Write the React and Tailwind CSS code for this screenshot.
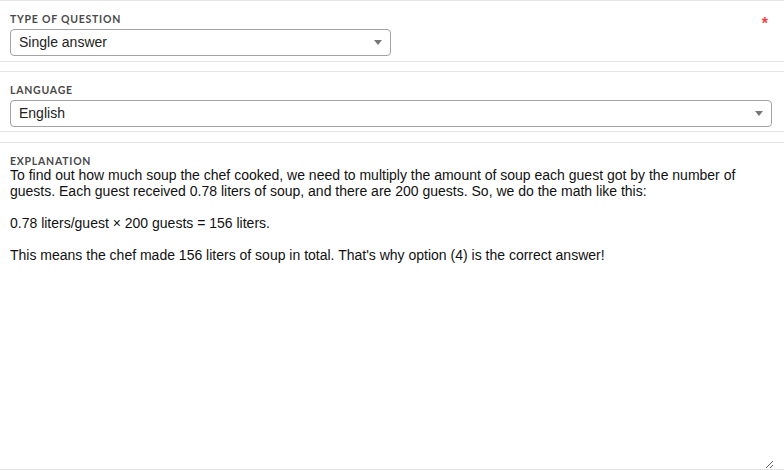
import { useState } from "react";

const labelCls =
  "block text-[10.5px] leading-[12px] font-bold uppercase tracking-[0.75px] text-[#4a4a4a] font-['Lato',sans-serif]";

const Caret = () => (
  <svg width="8" height="5" viewBox="0 0 8 5" className="shrink-0">
    <path d="M0 0h8L4 5z" fill="#777" />
  </svg>
);

const SelectBox = ({ value, className }) => (
  <div
    className={`h-[27px] flex items-center justify-between pl-[8px] pr-[8px] border border-[#a3a3a3] rounded-[4px] bg-white text-[14px] text-[#222] ${className}`}
  >
    <span>{value}</span>
    <Caret />
  </div>
);

const explanation = `To find out how much soup the chef cooked, we need to multiply the amount of soup each guest got by the number of guests. Each guest received 0.78 liters of soup, and there are 200 guests. So, we do the math like this:

0.78 liters/guest × 200 guests = 156 liters.

This means the chef made 156 liters of soup in total. That's why option (4) is the correct answer!`;

export default function App() {
  const [text, setText] = useState(explanation);

  return (
    <div className="w-[784px] h-[470px] bg-white overflow-hidden font-['Liberation_Sans',Arial,sans-serif]">
      {/* Type of question */}
      <section className="h-[62px] border-y border-[#e4e4e4] px-[10px] pt-[12px] relative">
        <span className={labelCls}>Type of question</span>
        <span className="absolute right-[16px] top-[15px] text-[#ef4444] text-[16px] leading-[16px] font-bold">
          *
        </span>
        <SelectBox value="Single answer" className="mt-[4px] w-[381px]" />
      </section>

      {/* Language */}
      <section className="h-[61px] mt-[9px] border-y border-[#e4e4e4] px-[10px] pt-[12px]">
        <span className={labelCls}>Language</span>
        <SelectBox value="English" className="mt-[4px] w-[762px]" />
      </section>

      {/* Explanation */}
      <section className="h-[328px] mt-[10px] border-y border-[#e4e4e4] px-[10px] pt-[12px] flex flex-col">
        <span className={labelCls}>Explanation</span>
        <textarea
          value={text}
          onChange={(e) => setText(e.target.value)}
          className="flex-1 w-full resize-y outline-none text-[14px] leading-[16px] text-[#111] font-['Liberation_Sans',Arial,sans-serif] pb-[2px]"
        />
      </section>
    </div>
  );
}
